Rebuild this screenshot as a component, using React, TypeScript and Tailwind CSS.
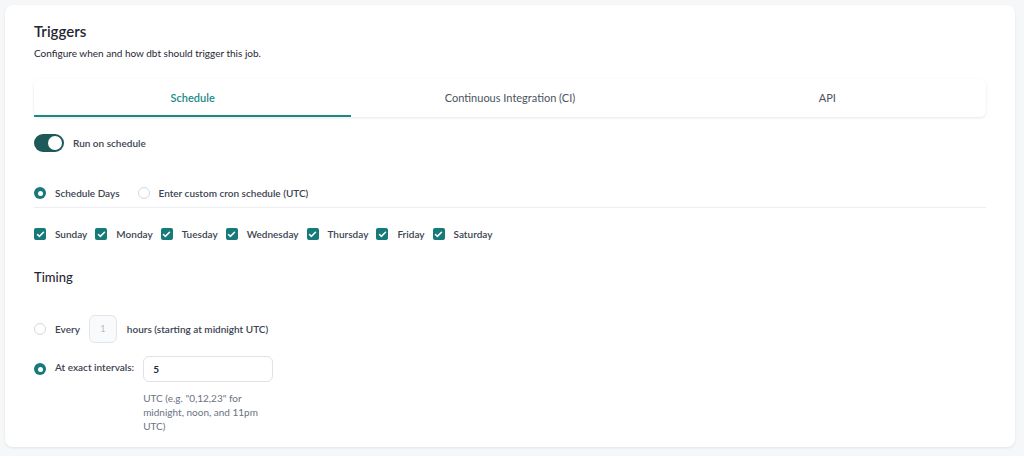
import { Check } from "lucide-react";

const days = [
  "Sunday",
  "Monday",
  "Tuesday",
  "Wednesday",
  "Thursday",
  "Friday",
  "Saturday",
];

function Radio({ checked }: { checked?: boolean }) {
  return checked ? (
    <span className="flex h-3 w-3 shrink-0 items-center justify-center rounded-full bg-[#157a78]">
      <span className="h-[5px] w-[5px] rounded-full bg-white" />
    </span>
  ) : (
    <span className="block h-3 w-3 shrink-0 rounded-full border border-[#d5d9de] bg-white" />
  );
}

function DayCheckbox({ label }: { label: string }) {
  return (
    <label className="flex items-center gap-[9px]">
      <span className="flex h-3 w-3 items-center justify-center rounded-[2px] bg-[#157a78]">
        <Check className="h-[9px] w-[9px] text-white" strokeWidth={4} />
      </span>
      <span>{label}</span>
    </label>
  );
}

export default function App() {
  return (
    <div
      className="min-h-screen bg-[#f6f7f9] p-[5px] text-[#3b4350]"
      style={{ fontFamily: "Lato, 'Open Sans', sans-serif" }}
    >
      <div className="h-[442px] w-[1010px] rounded-lg bg-white px-[29px] pt-[16px] shadow-[0_1px_3px_rgba(0,0,0,0.08)]">
        {/* 헤더 */}
        <h2 className="text-[15px] font-semibold leading-5 text-[#1f2733]">
          Triggers
        </h2>
        <p className="mt-[4px] text-[10px] leading-4 text-[#1f2733]">
          Configure when and how dbt should trigger this job.
        </p>

        {/* 탭 */}
        <div className="mt-[18px] flex h-[38px] rounded-md bg-white text-[11px] shadow-[0_1px_3px_rgba(0,0,0,0.1)]">
          <div className="flex flex-1 items-center justify-center border-b-2 border-[#1a8a86] pt-[2px] font-semibold text-[#1a8a86]">
            Schedule
          </div>
          <div className="flex flex-1 items-center justify-center text-[#4b5361]">
            Continuous Integration (CI)
          </div>
          <div className="flex flex-1 items-center justify-center text-[#4b5361]">
            API
          </div>
        </div>

        {/* 토글 */}
        <div className="mt-[17px] flex items-center gap-[9px] text-[10px] font-semibold">
          <span className="flex h-[18px] w-[30px] items-center justify-end rounded-full bg-[#1d5a57] pr-[2px]">
            <span className="h-[14px] w-[14px] rounded-full bg-white" />
          </span>
          <span>Run on schedule</span>
        </div>

        {/* 스케줄 타입 */}
        <div className="mt-[33px] flex h-4 items-center text-[10px] font-semibold">
          <Radio checked />
          <span className="ml-[9px]">Schedule Days</span>
          <span className="ml-[18px] flex">
            <Radio />
          </span>
          <span className="ml-[9px]">Enter custom cron schedule (UTC)</span>
        </div>
        <div className="mt-[6px] h-px bg-[#eceef1]" />

        {/* 요일 */}
        <div className="mt-[18px] flex h-4 items-center gap-[8px] text-[10px] font-semibold">
          {days.map((d) => (
            <DayCheckbox key={d} label={d} />
          ))}
        </div>

        {/* 타이밍 */}
        <h3 className="mt-[25px] text-[13px] font-medium leading-5 text-[#1f2733]">
          Timing
        </h3>

        <div className="mt-[28px] flex items-center text-[10px] font-semibold">
          <Radio />
          <span className="ml-[9px]">Every</span>
          <span className="ml-[9px] flex h-7 w-7 items-center justify-center rounded-md border border-[#e2e5e9] bg-[#f9fafb] text-[9px] font-normal text-[#b6bcc4]">
            1
          </span>
          <span className="ml-[10px]">hours (starting at midnight UTC)</span>
        </div>

        <div className="mt-[13px] flex items-start text-[10px] font-semibold">
          <span className="mt-[7px] flex">
            <Radio checked />
          </span>
          <span className="ml-[9px] mt-[4px]">At exact intervals:</span>
          <div className="ml-[9px]">
            <div className="flex h-[26px] w-[130px] items-center rounded-md border border-[#dfe2e6] px-[9px] font-bold text-[#1f2733]">
              5
            </div>
            <p className="mt-[9px] w-[130px] text-[10px] font-normal leading-[14px] text-[#6b7380]">
              UTC (e.g. "0,12,23" for midnight, noon, and 11pm UTC)
            </p>
          </div>
        </div>
      </div>
    </div>
  );
}
